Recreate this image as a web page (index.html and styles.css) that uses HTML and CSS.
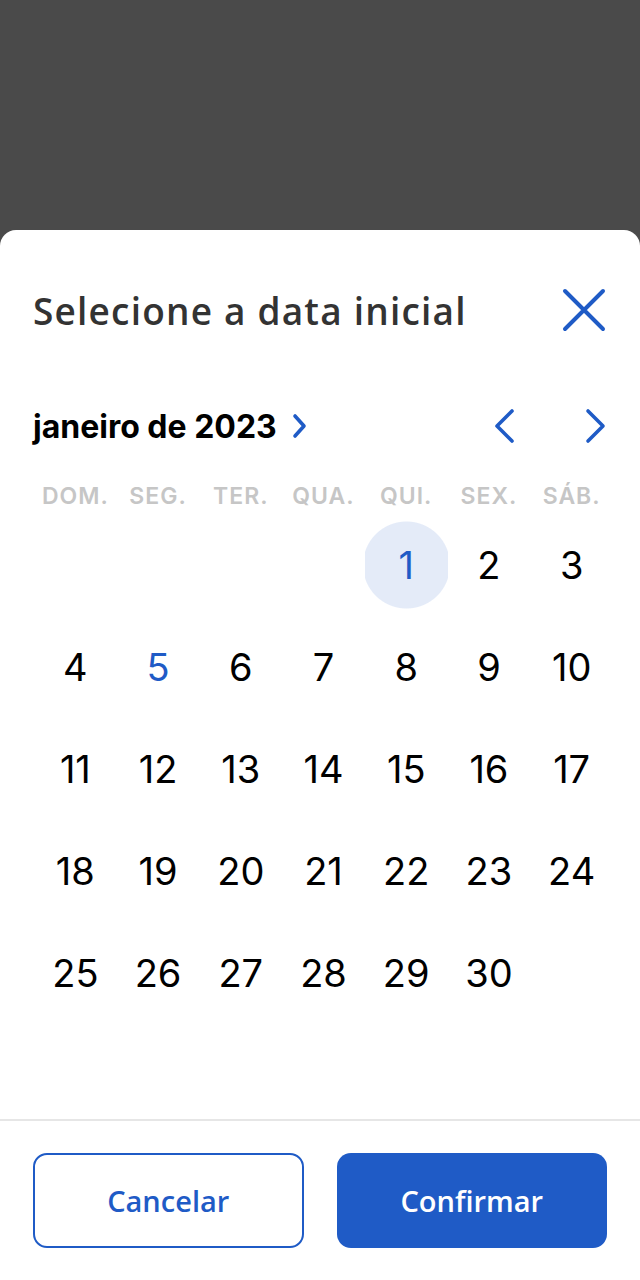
FILE: index.html
```html
<!DOCTYPE html>
<html lang="pt-BR">
<head>
  <meta charset="UTF-8">
  <title>Selecione a data inicial</title>
  <meta name="viewport" content="width=device-width, initial-scale=1.0">
  <link rel="stylesheet" href="styles.css">
</head>
<body>

  <div class="backdrop"></div>

  <div class="sheet">
    <div class="sheet-header">
      <h2 class="sheet-title">Selecione a data inicial</h2>
      <button class="icon-btn close-btn" aria-label="Fechar">
        <svg width="44" height="44" viewBox="0 0 44 44"><path d="M3 3 L41 41 M41 3 L3 41" stroke="#1f5bc6" stroke-width="4" stroke-linecap="round" fill="none"/></svg>
      </button>
    </div>

    <div class="month-bar">
      <div class="month-label">
        janeiro de 2023
        <svg width="16" height="26" viewBox="0 0 16 26"><path d="M3 3 L12 13 L3 23" stroke="#1f5bc6" stroke-width="3.6" stroke-linecap="round" stroke-linejoin="round" fill="none"/></svg>
      </div>
      <div class="month-nav">
        <svg width="24" height="36" viewBox="0 0 24 36"><path d="M20 3 L5 18 L20 33" stroke="#1f5bc6" stroke-width="3.6" stroke-linecap="round" stroke-linejoin="round" fill="none"/></svg>
        <svg width="24" height="36" viewBox="0 0 24 36"><path d="M4 3 L19 18 L4 33" stroke="#1f5bc6" stroke-width="3.6" stroke-linecap="round" stroke-linejoin="round" fill="none"/></svg>
      </div>
    </div>

    <div class="weekdays">
      <span>DOM.</span><span>SEG.</span><span>TER.</span><span>QUA.</span><span>QUI.</span><span>SEX.</span><span>SÁB.</span>
    </div>

    <div class="days">
      <span></span><span></span><span></span><span></span>
      <span class="day selected">1</span><span class="day">2</span><span class="day">3</span>
      <span class="day">4</span><span class="day today">5</span><span class="day">6</span><span class="day">7</span><span class="day">8</span><span class="day">9</span><span class="day">10</span>
      <span class="day">11</span><span class="day">12</span><span class="day">13</span><span class="day">14</span><span class="day">15</span><span class="day">16</span><span class="day">17</span>
      <span class="day">18</span><span class="day">19</span><span class="day">20</span><span class="day">21</span><span class="day">22</span><span class="day">23</span><span class="day">24</span>
      <span class="day">25</span><span class="day">26</span><span class="day">27</span><span class="day">28</span><span class="day">29</span><span class="day">30</span>
    </div>

    <div class="sheet-footer">
      <button class="btn btn-outline">Cancelar</button>
      <button class="btn btn-primary">Confirmar</button>
    </div>
  </div>

</body>
</html>
```

FILE: styles.css
```css
body {
  margin: 0;
  background: #4a4a4a;
  font-family: Inter, "Liberation Sans", sans-serif;
}
.backdrop {
  height: 230px;
}
.sheet {
  height: 1050px;
  background: #fff;
  border-radius: 16px 16px 0 0;
  display: flex;
  flex-direction: column;
}
.sheet-header {
  display: flex;
  align-items: center;
  justify-content: space-between;
  padding: 58px 34px 0 33px;
  height: 44px;
}
.sheet-title {
  margin: 0;
  font-family: "Open Sans", sans-serif;
  font-weight: 600;
  font-size: 37px;
  letter-spacing: 1.2px;
  color: #333;
}
.icon-btn {
  border: none;
  background: none;
  padding: 0;
}
.close-btn svg {
  display: block;
}
.month-bar {
  display: flex;
  align-items: center;
  justify-content: space-between;
  padding: 0 32px 0 33px;
  margin-top: 74px;
  height: 40px;
}
.month-label {
  display: flex;
  align-items: center;
  gap: 15px;
  font-weight: 700;
  font-size: 32px;
  color: #000;
}
.month-nav {
  display: flex;
  gap: 68px;
}
.month-nav svg {
  display: block;
}
.weekdays,
.days {
  display: grid;
  grid-template-columns: repeat(7, minmax(0, 1fr));
  padding: 0 27px 0 34px;
}
.weekdays {
  margin-top: 36px;
  font-size: 23px;
  font-weight: 600;
  letter-spacing: 1px;
  color: #c6c6c6;
  text-align: center;
}
.days {
  margin-top: 11px;
  grid-auto-rows: 102px;
}
.day {
  display: flex;
  align-items: center;
  justify-content: center;
  height: 88px;
  font-size: 38px;
  color: #000;
}
.day.selected {
  background: radial-gradient(circle 44px at center, #e4ebf8 43px, transparent 44px);
  color: #1f5bc6;
}
.day.today {
  color: #1f5bc6;
}
.sheet-footer {
  margin-top: auto;
  border-top: 2px solid #e6e6e6;
  display: grid;
  grid-template-columns: 1fr 1fr;
  gap: 33px;
  padding: 32px 33px 32px 33px;
}
.btn {
  height: 95px;
  border-radius: 14px;
  font-family: "Open Sans", sans-serif;
  font-weight: 600;
  font-size: 29px;
}
.btn-outline {
  background: #fff;
  border: 2px solid #1f5bc6;
  color: #1f5bc6;
}
.btn-primary {
  background: #1f5bc6;
  border: none;
  color: #fff;
}
```
